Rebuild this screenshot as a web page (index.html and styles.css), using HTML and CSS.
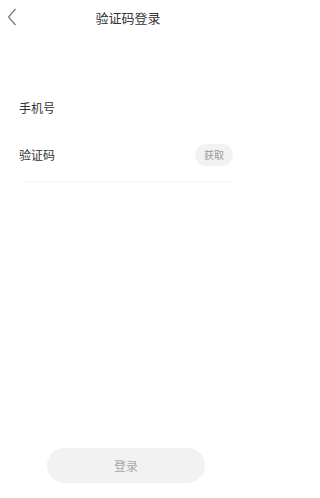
FILE: index.html
```html
<!DOCTYPE html>
<html lang="zh">
<head>
<meta charset="utf-8">
<meta name="viewport" content="width=256">
<link rel="stylesheet" href="styles.css">
</head>
<body>
<div class="page">
  <header class="nav">
    <svg class="back" width="10" height="18" viewBox="0 0 10 18"><path d="M8.5 1 L1.5 9 L8.5 17" fill="none" stroke="#777" stroke-width="1.2"/></svg>
    <div class="title">验证码登录</div>
  </header>
  <div class="form">
    <div class="row phone"><span class="label">手机号</span></div>
    <div class="row code">
      <span class="label">验证码</span>
      <span class="get">获取</span>
    </div>
    <div class="divider"></div>
  </div>
  <div class="footer">
    <button class="login">登录</button>
  </div>
</div>
</body>
</html>
```
FILE: styles.css
```css
html, body {
  margin: 0;
  padding: 0;
  background: #fff;
  font-family: "Noto Sans CJK SC", "Noto Sans", sans-serif;
  color: #333;
}
.page {
  width: 256px;
  height: 498px;
  display: flex;
  flex-direction: column;
}
.nav {
  position: relative;
  height: 34px;
  display: flex;
  align-items: center;
  justify-content: center;
}
.back {
  position: absolute;
  left: 7px;
  top: 8px;
}
.title {
  font-size: 13px;
  color: #333;
  line-height: 1;
}
.form {
  padding: 0 23px 0 19px;
  margin-top: 60px;
}
.row {
  display: flex;
  align-items: center;
  justify-content: space-between;
  font-size: 12px;
  line-height: 1;
}
.phone {
  height: 28px;
}
.code {
  margin-top: 21px;
  height: 24px;
}
.get {
  width: 38px;
  height: 22px;
  border-radius: 11px;
  background: #f2f2f2;
  color: #999;
  font-size: 10px;
  display: flex;
  align-items: center;
  justify-content: center;
}
.divider {
  margin: 14px 0 0 5px;
  height: 1px;
  background: #f5f5f5;
}
.footer {
  margin-top: auto;
  display: flex;
  justify-content: center;
  padding: 0 4px 15px 0;
}
.login {
  width: 158px;
  height: 35px;
  border: none;
  border-radius: 18px;
  background: #f2f2f2;
  color: #a8a8a8;
  font-family: inherit;
  font-size: 12px;
  padding: 0;
}
```
